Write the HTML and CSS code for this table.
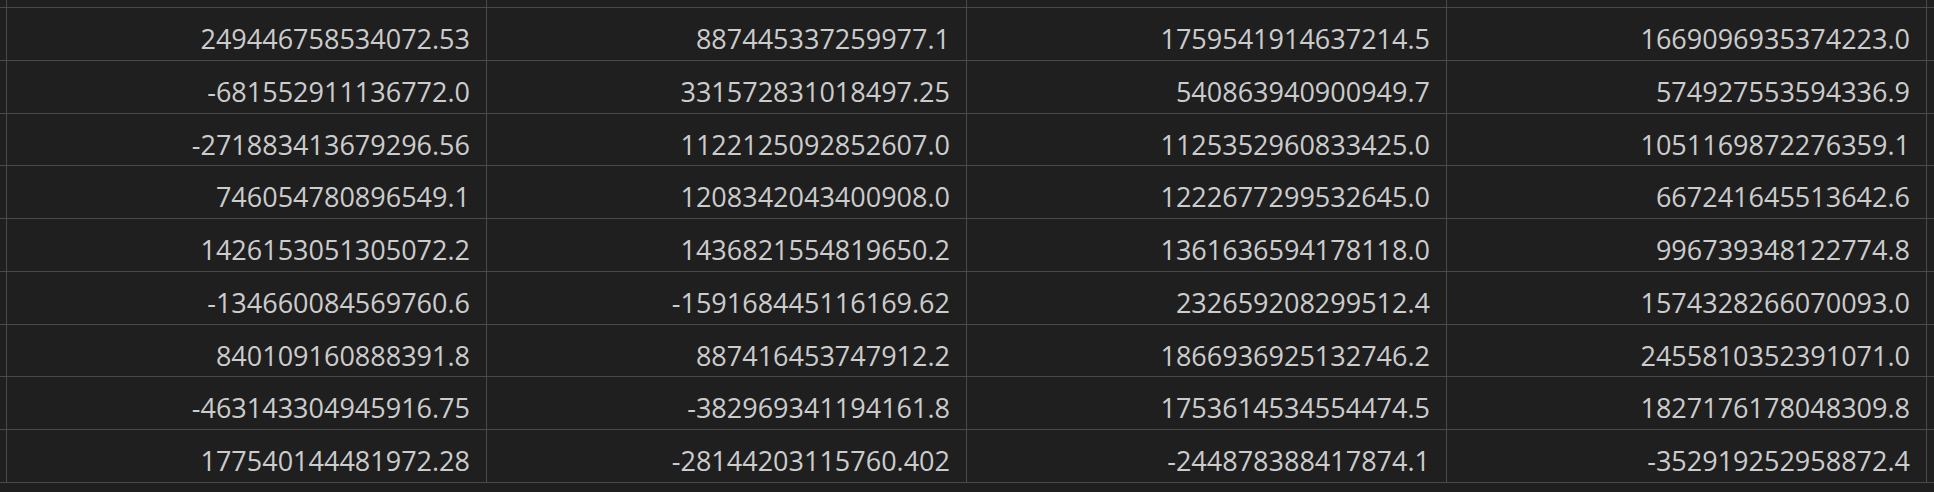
FILE: index.html
```html
<!DOCTYPE html>
<html lang="en">
<head>
  <meta charset="UTF-8" />
  <title>Data Viewer</title>
  <link rel="stylesheet" href="styles.css">
</head>
<body>
  <div class="grid">
    <div class="cell edge"></div><div class="cell"></div><div class="cell"></div><div class="cell"></div><div class="cell"></div><div class="cell tail"></div>

    <div class="cell edge"></div>
    <div class="cell num">249446758534072.53</div>
    <div class="cell num">887445337259977.1</div>
    <div class="cell num">1759541914637214.5</div>
    <div class="cell num">1669096935374223.0</div>
    <div class="cell tail"></div>

    <div class="cell edge"></div>
    <div class="cell num">-681552911136772.0</div>
    <div class="cell num">331572831018497.25</div>
    <div class="cell num">540863940900949.7</div>
    <div class="cell num">574927553594336.9</div>
    <div class="cell tail"></div>

    <div class="cell edge"></div>
    <div class="cell num">-271883413679296.56</div>
    <div class="cell num">1122125092852607.0</div>
    <div class="cell num">1125352960833425.0</div>
    <div class="cell num">1051169872276359.1</div>
    <div class="cell tail"></div>

    <div class="cell edge"></div>
    <div class="cell num">746054780896549.1</div>
    <div class="cell num">1208342043400908.0</div>
    <div class="cell num">1222677299532645.0</div>
    <div class="cell num">667241645513642.6</div>
    <div class="cell tail"></div>

    <div class="cell edge"></div>
    <div class="cell num">1426153051305072.2</div>
    <div class="cell num">1436821554819650.2</div>
    <div class="cell num">1361636594178118.0</div>
    <div class="cell num">996739348122774.8</div>
    <div class="cell tail"></div>

    <div class="cell edge"></div>
    <div class="cell num">-134660084569760.6</div>
    <div class="cell num">-159168445116169.62</div>
    <div class="cell num">232659208299512.4</div>
    <div class="cell num">1574328266070093.0</div>
    <div class="cell tail"></div>

    <div class="cell edge"></div>
    <div class="cell num">840109160888391.8</div>
    <div class="cell num">887416453747912.2</div>
    <div class="cell num">1866936925132746.2</div>
    <div class="cell num">2455810352391071.0</div>
    <div class="cell tail"></div>

    <div class="cell edge"></div>
    <div class="cell num">-463143304945916.75</div>
    <div class="cell num">-382969341194161.8</div>
    <div class="cell num">1753614534554474.5</div>
    <div class="cell num">1827176178048309.8</div>
    <div class="cell tail"></div>

    <div class="cell edge"></div>
    <div class="cell num">177540144481972.28</div>
    <div class="cell num">-28144203115760.402</div>
    <div class="cell num">-244878388417874.1</div>
    <div class="cell num">-352919252958872.4</div>
    <div class="cell tail"></div>
  </div>
</body>
</html>
```

FILE: styles.css
```css
html, body {
  margin: 0;
  padding: 0;
  background: #1f1f1f;
  height: 100%;
  overflow: hidden;
}
.grid {
  display: grid;
  grid-template-columns: 7px repeat(4, 480px) 1fr;
  grid-template-rows: 8px repeat(9, 52.75px);
  font-family: "Open Sans", "Noto Sans", sans-serif;
  font-size: 27px;
  color: #cccccc;
}
.cell {
  box-sizing: border-box;
  border-right: 1px solid #4a4a4a;
  border-bottom: 1px solid #4a4a4a;
  overflow: hidden;
  white-space: nowrap;
}
.cell.tail {
  border-right: none;
}
.num {
  text-align: right;
  padding: 9px 16px 0 0;
  line-height: 44px;
}
```
